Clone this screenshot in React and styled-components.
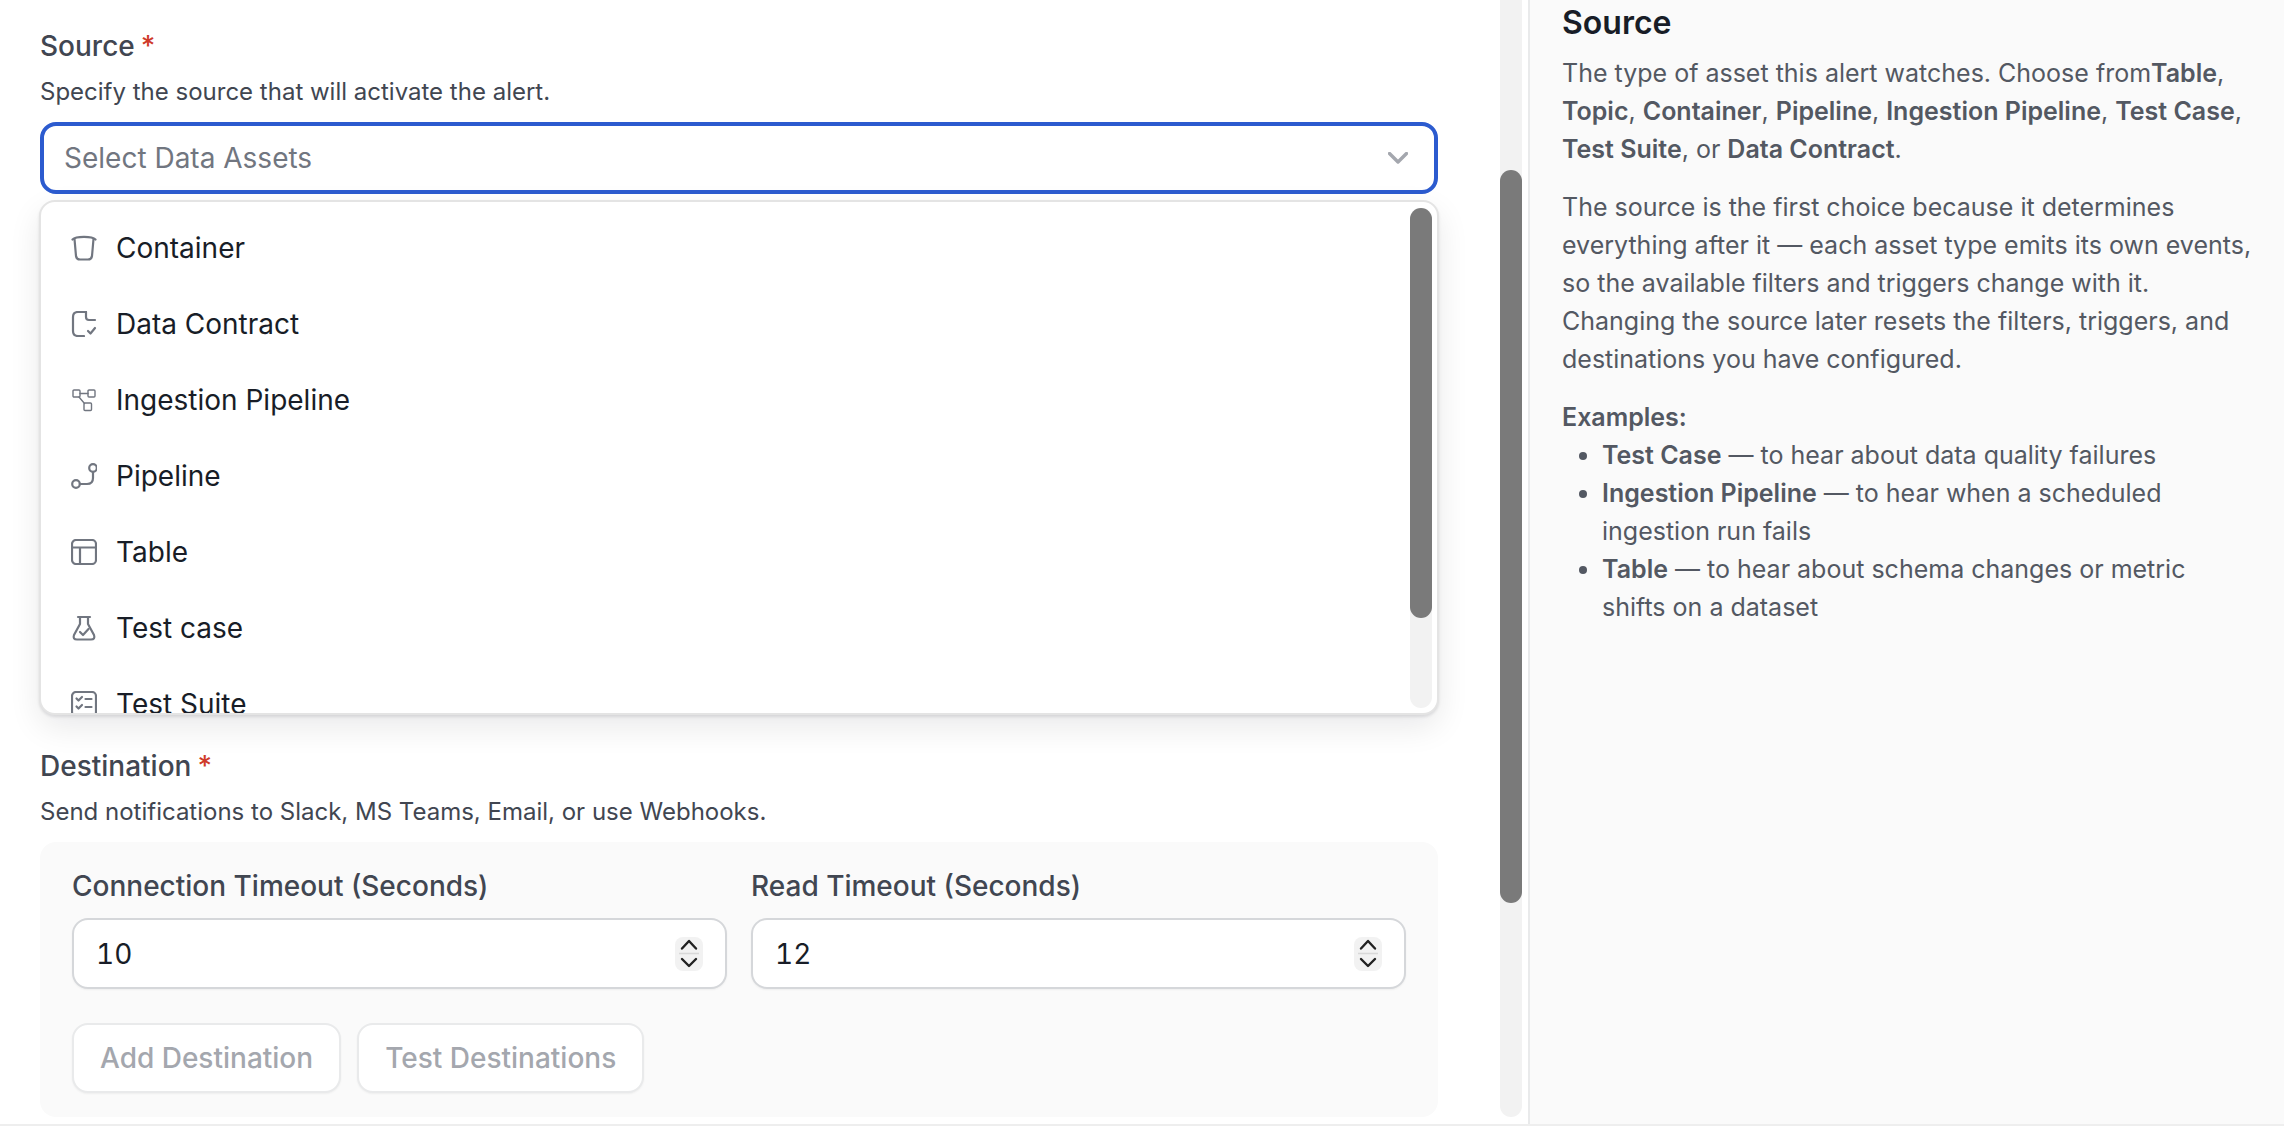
import React from 'react';
import styled, { createGlobalStyle } from 'styled-components';

const GlobalStyle = createGlobalStyle`
  html, body {
    margin: 0;
    padding: 0;
    background: #fff;
  }
  * {
    box-sizing: border-box;
  }
  body {
    font-family: Inter, "Liberation Sans", sans-serif;
  }
`;

const Page = styled.div`
  display: flex;
  height: 1126px;
  overflow: hidden;
  border-bottom: 2px solid #eeeeee;
`;

const FormColumn = styled.main`
  width: 1500px;
  flex: none;
  padding: 26px 62px 0 40px;
`;

const PageScrollbar = styled.div`
  width: 22px;
  height: 1117px;
  flex: none;
  background: #f2f2f2;
  border-radius: 0 0 11px 11px;
  padding-top: 170px;
`;

const Thumb = styled.div`
  height: ${(p) => p.$height}px;
  background: #7a7a7a;
  border-radius: 11px;
`;

const HelpPanel = styled.aside`
  width: 756px;
  flex: none;
  margin-left: 6px;
  padding: 0 30px 0 32px;
  border-left: 2px solid #e9eaeb;
  background: #fafafa;
  color: #535862;
  font-size: 25px;
  line-height: 38.2px;

  p {
    margin: 0 0 19px;
  }
  p + p {
    margin-bottom: 20px;
  }
  strong {
    font-weight: 600;
  }
`;

const HelpTitle = styled.h2`
  margin: 0 0 8px;
  font-size: 32px;
  line-height: 46px;
  font-weight: 600;
  color: #181d27;
`;

const ExamplesHead = styled.strong`
  display: block;
  line-height: 37px;
`;

const ExampleList = styled.ul`
  margin: 0;
  padding-left: 40px;
`;

const Label = styled.div`
  font-size: 28px;
  line-height: 40px;
  font-weight: 500;
  color: #414651;
`;

const Star = styled.span`
  margin-left: 6px;
  color: #cf3a2a;
`;

const Hint = styled.div`
  margin-top: 8px;
  font-size: 24px;
  line-height: 36px;
  color: #414651;
`;

const SelectBox = styled.div`
  display: flex;
  align-items: center;
  justify-content: space-between;
  height: 72px;
  margin-top: 12px;
  padding: 0 26px 0 20px;
  border: 4px solid #2c5bcf;
  border-radius: 16px;
  background: #fff;
  font-size: 28px;
  color: #717680;
`;

const Dropdown = styled.div`
  display: flex;
  height: 515px;
  margin: 6px 0 31px -1px;
  width: 1400px;
  padding: 0 5px 0 0;
  border: 2px solid #e4e4e4;
  border-radius: 16px;
  background: #fff;
  box-shadow: 0 12px 32px rgba(10, 13, 18, 0.09), 0 2px 3px rgba(10, 13, 18, 0.1);
`;

const OptionList = styled.div`
  flex: 1;
  overflow: hidden;
  padding: 8px 0 0 30px;
`;

const Option = styled.div`
  display: flex;
  align-items: center;
  gap: 19px;
  height: 76px;
  font-size: 28px;
  color: #181d27;
`;

const IconBox = styled.svg`
  width: 26px;
  height: 26px;
  flex: none;
  fill: none;
  stroke: #717680;
  stroke-width: ${(p) => p.$stroke || 2.2};
  stroke-linecap: round;
  stroke-linejoin: round;
`;

const ListScrollbar = styled.div`
  width: 22px;
  margin: 6px 0 5px;
  flex: none;
  background: #f2f2f2;
  border-radius: 11px;
`;

const DestinationCard = styled.div`
  margin-top: 12px;
  padding: 24px 32px;
  border-radius: 16px;
  background: #fafafa;
`;

const FieldGrid = styled.div`
  display: grid;
  grid-template-columns: 1fr 1fr;
  gap: 24px;
`;

const NumberBox = styled.div`
  display: flex;
  align-items: center;
  justify-content: space-between;
  height: 71px;
  margin-top: 12px;
  padding: 0 22px 0 22px;
  border: 2px solid #d5d7da;
  border-radius: 16px;
  background: #fff;
  box-shadow: 0 1px 2px rgba(10, 13, 18, 0.05);
  font-size: 28px;
  font-variant-numeric: tabular-nums;
  color: #181d27;
`;

const Spinner = styled.svg`
  width: 28px;
  height: 34px;
  background: #f2f2f2;
  border-radius: 8px;
  fill: none;
`;

const ButtonRow = styled.div`
  display: flex;
  gap: 16px;
  margin-top: 34px;
`;

const GhostButton = styled.button`
  height: 70px;
  padding: 0 26px;
  border: 2px solid #e9eaeb;
  border-radius: 16px;
  background: #fff;
  box-shadow: 0 1px 2px rgba(10, 13, 18, 0.05);
  font-family: inherit;
  font-size: 28px;
  font-weight: 500;
  color: #a4a7ae;
`;

const ContainerIcon = () => (
  <IconBox viewBox="0 0 26 26">
    <path d="M1.5 4.5C5 1 21 1 24.5 4.5" />
    <path d="M3.5 4L5 21Q5.5 24.5 9 24.5H17Q20.5 24.5 21 21L22.5 4" />
  </IconBox>
);

const ContractIcon = () => (
  <IconBox viewBox="0 0 26 26">
    <path d="M15 1H7Q2 1 2 6V20Q2 25 7 25H13" />
    <path d="M15 1V6Q15 9 18 9H24" />
    <path d="M17 20L19.5 22.5L24 17" />
  </IconBox>
);

const IngestionIcon = () => (
  <IconBox viewBox="0 0 26 26" $stroke={1.4}>
    <rect x="2" y="3" width="7" height="7" rx="1" />
    <rect x="17" y="3" width="7" height="7" rx="1" />
    <rect x="13" y="16" width="7.5" height="7.5" rx="1" />
    <path d="M9 6.5H17M8 10L13.5 16.5" />
  </IconBox>
);

const PipelineIcon = () => (
  <IconBox viewBox="0 0 26 26">
    <circle cx="5" cy="21" r="3.8" />
    <circle cx="22" cy="5" r="3.8" />
    <path d="M8.8 21H16Q22 21 22 15V8.8" />
  </IconBox>
);

const TableIcon = () => (
  <IconBox viewBox="0 0 26 26">
    <rect x="1" y="1" width="24" height="24" rx="4" />
    <path d="M1 8.5H25M9 8.5V25" />
  </IconBox>
);

const FlaskIcon = () => (
  <IconBox viewBox="0 0 26 26">
    <path d="M7 2H19" />
    <path d="M9 2V9L3 20Q1.5 24.5 6 24.5H20Q24.5 24.5 23 20L17 9V2" />
    <path d="M9 17L12 20L17.5 14" />
  </IconBox>
);

const SuiteIcon = () => (
  <IconBox viewBox="0 0 26 26">
    <rect x="1" y="1" width="24" height="24" rx="4" />
    <path d="M5.5 7.5L7.5 9.5L11 6M5.5 15.5L7.5 17.5L11 14M14.5 8H20.5M14.5 16H20.5" />
  </IconBox>
);

const options = [
  ['Container', ContainerIcon],
  ['Data Contract', ContractIcon],
  ['Ingestion Pipeline', IngestionIcon],
  ['Pipeline', PipelineIcon],
  ['Table', TableIcon],
  ['Test case', FlaskIcon],
  ['Test Suite', SuiteIcon],
];

const NumberField = ({ label, value }) => (
  <div>
    <Label>{label}</Label>
    <NumberBox>
      {value}
      <Spinner viewBox="0 0 28 34">
        <path d="M7 11.5L14 4L21 11.5" stroke="#222" strokeWidth="2.4" strokeLinecap="round" strokeLinejoin="round" />
        <path d="M4 16.5H24" stroke="#d8d8d8" strokeWidth="1.6" />
        <path d="M7 22L14 29L21 22" stroke="#222" strokeWidth="2.4" strokeLinecap="round" strokeLinejoin="round" />
      </Spinner>
    </NumberBox>
  </div>
);

const App = () => (
  <>
    <GlobalStyle />
    <Page>
      <FormColumn>
        <Label>
          Source<Star>*</Star>
        </Label>
        <Hint>Specify the source that will activate the alert.</Hint>
        <SelectBox>
          Select Data Assets
          <svg width="20" height="12" viewBox="0 0 20 12" fill="none">
            <path d="M1.5 1.5L10 10L18.5 1.5" stroke="#a4a7ae" strokeWidth="3.4" strokeLinecap="round" strokeLinejoin="round" />
          </svg>
        </SelectBox>
        <Dropdown>
          <OptionList>
            {options.map(([name, Icon]) => (
              <Option key={name}>
                <Icon />
                {name}
              </Option>
            ))}
          </OptionList>
          <ListScrollbar>
            <Thumb $height={410} />
          </ListScrollbar>
        </Dropdown>
        <Label>
          Destination<Star>*</Star>
        </Label>
        <Hint>Send notifications to Slack, MS Teams, Email, or use Webhooks.</Hint>
        <DestinationCard>
          <FieldGrid>
            <NumberField label="Connection Timeout (Seconds)" value="10" />
            <NumberField label="Read Timeout (Seconds)" value="12" />
          </FieldGrid>
          <ButtonRow>
            <GhostButton>Add Destination</GhostButton>
            <GhostButton>Test Destinations</GhostButton>
          </ButtonRow>
        </DestinationCard>
      </FormColumn>
      <PageScrollbar>
        <Thumb $height={733} />
      </PageScrollbar>
      <HelpPanel>
        <HelpTitle>Source</HelpTitle>
        <p>
          The type of asset this alert watches. Choose from<strong>Table</strong>, <strong>Topic</strong>,{' '}
          <strong>Container</strong>, <strong>Pipeline</strong>, <strong>Ingestion Pipeline</strong>,{' '}
          <strong>Test Case</strong>, <strong>Test Suite</strong>, or <strong>Data Contract</strong>.
        </p>
        <p>
          The source is the first choice because it determines everything after it — each asset type emits its own
          events, so the available filters and triggers change with it. Changing the source later resets the filters,
          triggers, and destinations you have configured.
        </p>
        <ExamplesHead>Examples:</ExamplesHead>
        <ExampleList>
          <li>
            <strong>Test Case</strong> — to hear about data quality failures
          </li>
          <li>
            <strong>Ingestion Pipeline</strong> — to hear when a scheduled ingestion run fails
          </li>
          <li>
            <strong>Table</strong> — to hear about schema changes or metric shifts on a dataset
          </li>
        </ExampleList>
      </HelpPanel>
    </Page>
  </>
);

export default App;
